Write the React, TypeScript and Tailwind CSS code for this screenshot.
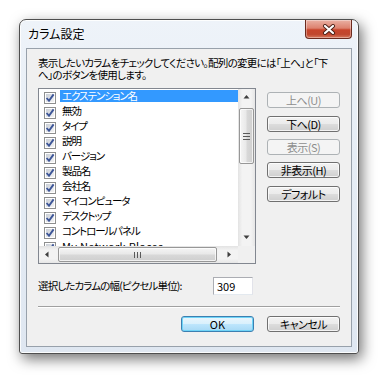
import React from "react";

const items = [
  "エクステンション名",
  "無効",
  "タイプ",
  "説明",
  "バージョン",
  "製品名",
  "会社名",
  "マイコンピュータ",
  "デスクトップ",
  "コントロールパネル",
  "My Network Places",
];

function CheckBox() {
  return (
    <svg width="12" height="12" viewBox="0 0 12 12" className="shrink-0">
      <defs>
        <linearGradient id="cbg" x1="0" y1="0" x2="1" y2="1">
          <stop offset="0" stopColor="#c9ced6" />
          <stop offset="1" stopColor="#f4f4f4" />
        </linearGradient>
      </defs>
      <rect x="0.5" y="0.5" width="11" height="11" fill="#fff" stroke="#8e8f8f" />
      <rect x="2" y="2" width="8" height="8" fill="url(#cbg)" />
      <path d="M2.6 6 L5 8.8 L9.6 2.4" fill="none" stroke="#3c5597" strokeWidth="1.9" />
    </svg>
  );
}

function Arrow({ dir }: { dir: "up" | "down" | "left" | "right" }) {
  const pts: Record<string, string> = {
    up: "0.5,4.5 3.5,1 6.5,4.5",
    down: "0.5,1.5 3.5,5 6.5,1.5",
    left: "4.5,0.5 1,3.5 4.5,6.5",
    right: "1.5,0.5 5,3.5 1.5,6.5",
  };
  return (
    <svg width="7" height="7" viewBox="0 0 7 7">
      <polygon points={pts[dir]} fill="#3f3f3f" />
    </svg>
  );
}

function Btn({
  children,
  kind = "normal",
}: {
  children: React.ReactNode;
  kind?: "normal" | "disabled" | "default";
}) {
  if (kind === "disabled") {
    return (
      <div className="h-[16px] w-[73px] rounded-[3px] border border-[#adb2b5] bg-[#f4f4f4] flex items-center justify-center text-[11px] leading-none tracking-[-0.5px] text-[#8d8d8d]">
        {children}
      </div>
    );
  }
  if (kind === "default") {
    return (
      <div className="h-[16px] w-[73px] rounded-[3px] border border-[#3c7fb1] bg-[linear-gradient(180deg,#eaf6fd_0%,#d9f0fc_50%,#bee6fd_50%,#a7d9f5_100%)] shadow-[inset_0_0_0_1px_#6fd4f7] flex items-center justify-center text-[11px] leading-none text-black">
        {children}
      </div>
    );
  }
  return (
    <div className="h-[16px] w-[73px] rounded-[3px] border border-[#707070] bg-[linear-gradient(180deg,#f2f2f2_0%,#ebebeb_50%,#dddddd_50%,#cfcfcf_100%)] shadow-[inset_0_0_0_1px_rgba(255,255,255,0.75)] flex items-center justify-center text-[11px] leading-none tracking-[-0.5px] text-black">
      {children}
    </div>
  );
}

function ListBox() {
  return (
    <div className="w-[218px] h-[176px] border border-[#828790] bg-white flex flex-col shrink-0">
      <div className="flex h-[157px]">
        <div className="w-[199px] h-[157px] overflow-hidden pt-[1px]">
          {items.map((it, i) => (
            <div key={it} className="h-[15px] flex items-start pl-[5px]">
              <div className="mt-[2px]">
                <CheckBox />
              </div>
              <div
                className={
                  i === 0
                    ? "ml-[4px] w-[309px] shrink-0 h-[12px] leading-[12px] pl-[2px] text-[10.5px] tracking-[-1.1px] bg-[#3399ff] text-white"
                    : i === items.length - 1
                    ? "ml-[4px] w-[309px] shrink-0 h-[12px] leading-[12px] pl-[2px] text-[11px] tracking-[0.3px] text-black"
                    : "ml-[4px] w-[309px] shrink-0 h-[12px] leading-[12px] pl-[2px] text-[10.5px] tracking-[-1.1px] text-black"
                }
              >
                {it}
              </div>
            </div>
          ))}
        </div>
        {/* vertical scrollbar */}
        <div className="w-[17px] h-[157px] flex flex-col bg-[linear-gradient(90deg,#e3e3e3,#f3f3f3_25%,#f3f3f3_75%,#e6e6e6)]">
          <div className="h-[17px] flex items-center justify-center">
            <Arrow dir="up" />
          </div>
          <div className="mt-[2px] ml-[1px] w-[15px] h-[56px] rounded-[2px] border border-[#979797] bg-[linear-gradient(90deg,#f5f5f5_0%,#e9e9e9_45%,#d8d8d8_55%,#cfcfcf_100%)] shadow-[inset_0_0_0_1px_rgba(255,255,255,0.7)] flex flex-col items-center justify-center gap-[2px]">
            <div className="w-[7px] h-[1px] bg-[#5a5a5a]" />
            <div className="w-[7px] h-[1px] bg-[#5a5a5a]" />
            <div className="w-[7px] h-[1px] bg-[#5a5a5a]" />
          </div>
          <div className="flex-1" />
          <div className="h-[17px] flex items-center justify-center">
            <Arrow dir="down" />
          </div>
        </div>
      </div>
      {/* horizontal scrollbar */}
      <div className="flex h-[17px]">
        <div className="w-[199px] h-[17px] flex items-center bg-[linear-gradient(180deg,#e3e3e3,#f3f3f3_25%,#f3f3f3_75%,#e6e6e6)]">
          <div className="w-[17px] h-[17px] flex items-center justify-center">
            <Arrow dir="left" />
          </div>
          <div className="ml-[2px] w-[159px] h-[15px] rounded-[2px] border border-[#979797] bg-[linear-gradient(180deg,#f5f5f5_0%,#e9e9e9_45%,#d8d8d8_55%,#cfcfcf_100%)] shadow-[inset_0_0_0_1px_rgba(255,255,255,0.7)] flex items-center justify-center gap-[2px]">
            <div className="w-[1px] h-[6px] bg-[#5a5a5a]" />
            <div className="w-[1px] h-[6px] bg-[#5a5a5a]" />
            <div className="w-[1px] h-[6px] bg-[#5a5a5a]" />
          </div>
          <div className="flex-1" />
          <div className="w-[17px] h-[17px] flex items-center justify-center">
            <Arrow dir="right" />
          </div>
        </div>
        <div className="w-[17px] h-[17px] bg-[#f0f0f0]" />
      </div>
    </div>
  );
}

function CloseButton() {
  return (
    <div className="w-[47px] h-[19px] rounded-b-[4px] border border-t-0 border-[#6b2a1e] bg-[linear-gradient(180deg,#eab1a4_0%,#dd826f_45%,#c7442b_55%,#c0472e_80%,#d77a5f_100%)] shadow-[inset_0_0_0_1px_rgba(255,255,255,0.35)] flex items-center justify-center">
      <svg width="14" height="11" viewBox="0 0 14 11">
        <path d="M3 2 L11 9 M11 2 L3 9" stroke="#4a1f16" strokeWidth="4" strokeLinecap="round" />
        <path d="M3 2 L11 9 M11 2 L3 9" stroke="#ffffff" strokeWidth="2.2" strokeLinecap="round" />
      </svg>
    </div>
  );
}

export default function App() {
  return (
    <div className="w-[382px] h-[377px] bg-white pt-[19px] pl-[19px] font-['Noto_Sans_CJK_JP',sans-serif] [font-feature-settings:'palt'] text-black">
      <div className="w-[340px] h-[335px] rounded-t-[7px] rounded-b-[3px] border border-[#4f4f4f] bg-[linear-gradient(180deg,#eef3f9_0%,#e6edf5_40%,#dfe7f1_100%)] shadow-[3px_5px_14px_rgba(0,0,0,0.55),inset_0_0_0_1px_rgba(255,255,255,0.85)] flex flex-col px-[6px]">
        {/* title bar */}
        <div className="h-[28px] flex items-start justify-between">
          <div className="pt-[7px] pl-[2px] text-[12px] leading-[14px] text-black [text-shadow:0_0_6px_#ffffff]">
            カラム設定
          </div>
          <CloseButton />
        </div>
        {/* client area */}
        <div className="h-[299px] border border-[#98a1ab] bg-[#f0f0f0] flex flex-col px-[11px] pt-[8px] pb-[14px]">
          <div className="text-[10.5px] leading-[12px] tracking-[-0.7px] whitespace-nowrap">
            <div className="h-[12px]">表示したいカラムをチェックしてください。配列の変更には「上へ」と「下</div>
            <div className="h-[12px]">へ」のボタンを使用します。</div>
          </div>
          <div className="mt-[7px] flex">
            <ListBox />
            <div className="ml-[11px] flex flex-col">
              <div className="mt-[4px]">
                <Btn kind="disabled">上へ(U)</Btn>
              </div>
              <div className="mt-[8px]">
                <Btn>下へ(D)</Btn>
              </div>
              <div className="mt-[7px]">
                <Btn kind="disabled">表示(S)</Btn>
              </div>
              <div className="mt-[7px]">
                <Btn>非表示(H)</Btn>
              </div>
              <div className="mt-[8px]">
                <Btn>デフォルト</Btn>
              </div>
            </div>
          </div>
          <div className="mt-[13px] flex items-center h-[18px]">
            <div className="w-[175px] text-[10.5px] leading-[12px] tracking-[-0.85px] whitespace-nowrap">
              選択したカラムの幅(ピクセル単位):
            </div>
            <div className="w-[40px] h-[18px] border border-[#abadb3] border-b-[#e3e9ef] border-r-[#e2e3ea] bg-white text-[11px] leading-[16px] pl-[3px]">
              309
            </div>
          </div>
          <div className="mt-[11px] h-[2px] border-t border-[#a0a0a0] border-b border-b-white" />
          <div className="mt-[8px] flex justify-end gap-[13px]">
            <Btn kind="default">OK</Btn>
            <Btn>キャンセル</Btn>
          </div>
        </div>
      </div>
    </div>
  );
}
